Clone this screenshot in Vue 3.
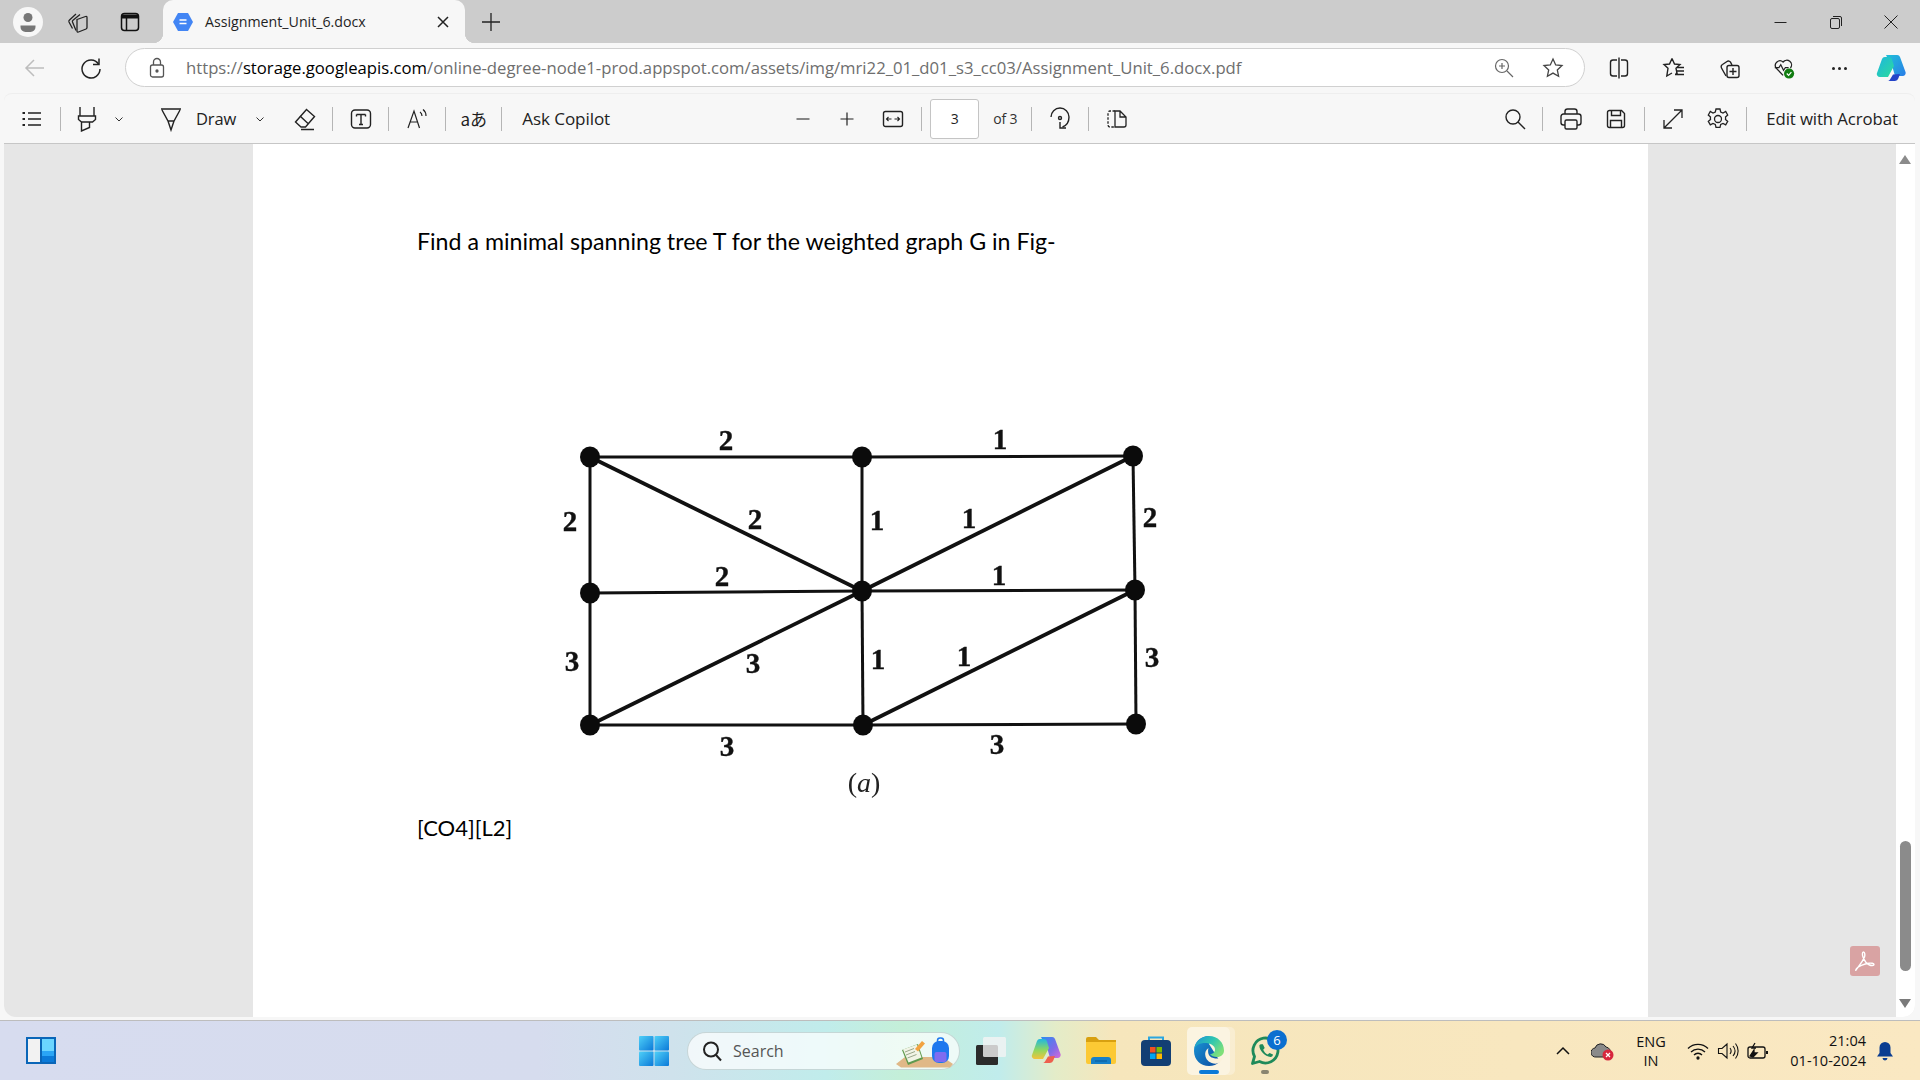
<script setup>
const nodes = [
  [590, 457], [862, 457], [1133, 456],
  [590, 593], [862, 591], [1135, 590],
  [590, 725], [863, 725], [1136, 724]
]

const edges = [
  [0, 1], [1, 2], [3, 4], [4, 5], [6, 7], [7, 8],
  [0, 3], [3, 6], [1, 4], [4, 7], [2, 5], [5, 8]
]

const diagonals = [[0, 4], [4, 2], [4, 6], [7, 5]]

const labels = [
  ['2', 726, 441], ['1', 1000, 440], ['2', 570, 522], ['2', 755, 520],
  ['1', 877, 521], ['1', 969, 519], ['2', 1150, 518], ['2', 722, 577],
  ['1', 999, 576], ['3', 572, 662], ['3', 753, 664], ['1', 878, 660],
  ['1', 964, 657], ['3', 1152, 658], ['3', 727, 747], ['3', 997, 745]
]
</script>

<template>
  <div class="screen">
    <div class="browser">
      <div class="tabstrip">
        <div class="profile">
          <svg width="22" height="22" viewBox="0 0 22 22"><circle cx="11" cy="6.500" r="4.500" fill="#777" /><path d="M3.500 14.500h15v1.500a5 5 0 0 1-5 5h-5a5 5 0 0 1-5-5z" fill="#777" /></svg>
        </div>
        <div class="strip-btn first">
          <svg width="24" height="24" viewBox="0 0 24 24" fill="none" stroke="#222" stroke-width="1.300"><path d="M6.500 18.500 3 12q-.5-1 .5-2L10 4" /><path d="M10 20.500 6.500 12q-.5-1 .5-1.800L14 4.500" /><path d="M11 9.500 19.500 6.500Q21 6 21 7.500V17.500Q21 18.500 20 19L12.500 22Q11 22.500 11 21Z" /></svg>
        </div>
        <div class="strip-btn second">
          <svg width="22" height="22" viewBox="0 0 22 22" fill="none" stroke="#111" stroke-width="1.500"><rect x="2.500" y="2.500" width="17" height="17" rx="3" /><path d="M3 5.500h16" stroke-width="4" /><path d="M7.500 7v12" /></svg>
        </div>
        <div class="tab">
          <svg class="favicon" width="22" height="22" viewBox="0 0 22 22"><path d="M6 2h10l5 9-5 9H6l-5-9z" fill="#4285f4" /><path d="M7.500 9h7M7.500 12.500h7" stroke="#fff" stroke-width="1.400" /></svg>
          <span class="tab-title">Assignment_Unit_6.docx</span>
          <svg class="tab-close" width="14" height="14" viewBox="0 0 14 14" stroke="#222" stroke-width="1.500"><path d="M2 2l10 10M12 2 2 12" /></svg>
        </div>
        <svg class="new-tab" width="20" height="20" viewBox="0 0 20 20" stroke="#222" stroke-width="1.300"><path d="M10 1v18M1 10h18" /></svg>
        <div class="win-controls">
          <svg width="16" height="16" viewBox="0 0 16 16" stroke="#222"><path d="M1.500 8.500h12" /></svg>
          <svg width="16" height="16" viewBox="0 0 16 16" fill="none" stroke="#222"><rect x="2.500" y="4.500" width="9" height="10" rx="1.500" /><path d="M5 2.500h7a1.500 1.500 0 0 1 1.500 1.500v8" /></svg>
          <svg width="16" height="16" viewBox="0 0 16 16" stroke="#222"><path d="M1.500 1.500l13 13M14.500 1.500l-13 13" /></svg>
        </div>
      </div>

      <div class="addressrow">
        <svg class="back" width="22" height="22" viewBox="0 0 22 22" fill="none" stroke="#bdbdbd" stroke-width="1.500"><path d="M20 11H2M10 3l-8 8 8 8" /></svg>
        <svg class="reload" width="24" height="24" viewBox="0 0 24 24" fill="none" stroke="#222" stroke-width="1.500"><path d="M19.500 8A9 9 0 1 0 21 13" /><path d="M20 2.500V8.500H14" /></svg>
        <div class="urlbox">
          <svg class="lock" width="18" height="22" viewBox="0 0 18 22" fill="none" stroke="#555" stroke-width="1.300"><rect x="2.500" y="8" width="13" height="12" rx="2" /><path d="M5.500 8V5a3.500 3.500 0 0 1 7 0v3" /><circle cx="9" cy="14" r="1" fill="#555" /></svg>
          <span class="url"><span class="dim">https://</span>storage.googleapis.com<span class="dim">/online-degree-node1-prod.appspot.com/assets/img/mri22_01_d01_s3_cc03/Assignment_Unit_6.docx.pdf</span></span>
          <svg class="url-zoom" width="20" height="20" viewBox="0 0 20 20" fill="none" stroke="#666" stroke-width="1.200"><circle cx="8" cy="8" r="6.500" /><path d="M8 5v6M5 8h6M13 13l6 6" /></svg>
          <svg class="url-star" width="22" height="22" viewBox="0 0 22 22" fill="none" stroke="#444" stroke-width="1.300"><path d="M11 2l2.700 5.900 6.300.7-4.700 4.300 1.300 6.300L11 16.100l-5.600 3.100 1.300-6.300L2 8.600l6.300-.7z" /></svg>
        </div>
        <div class="addr-icons">
          <svg width="24" height="24" viewBox="0 0 24 24" fill="none" stroke="#222" stroke-width="1.400"><path d="M10 4H6a2.500 2.500 0 0 0-2.500 2.500v11A2.500 2.500 0 0 0 6 20h4M14 4h4a2.500 2.500 0 0 1 2.500 2.500v11A2.500 2.500 0 0 1 18 20h-4M12 1.500v21" /></svg>
          <svg width="24" height="24" viewBox="0 0 24 24" fill="none" stroke="#222" stroke-width="1.400"><path d="M10 2.500l2.500 5.500 5.500.5-4 3.800 1.200 5.700-1.500-.8M10 2.500 7.500 8 2 8.500l4 3.800L4.800 20 10 17" /><path d="M15 11.500h7M15 15h7M13 18.500h9" /></svg>
          <svg width="24" height="24" viewBox="0 0 24 24" fill="none" stroke="#222" stroke-width="1.400"><path d="M9 20 4.500 12A2.500 2.500 0 0 1 5.500 8.500L10 5.500a2.500 2.500 0 0 1 3.500.7L15 9" /><rect x="10" y="9.500" width="12" height="12" rx="2" /><path d="M16 12v7M12.500 15.500h7" /></svg>
          <svg width="24" height="24" viewBox="0 0 26 26" fill="none"><path d="M12 21 4.500 13A5 5 0 0 1 12 6.500 5 5 0 0 1 20 13" stroke="#222" stroke-width="1.400" /><path d="M3 12.500h4.500l2-3 3 6 2-3H18" stroke="#222" stroke-width="1.300" /><circle cx="18.500" cy="19" r="5.500" fill="#107c10" /><path d="M16 19l2 2 3-3.500" stroke="#fff" stroke-width="1.300" /></svg>
          <span class="dots"><i></i><i></i><i></i></span>
          <svg class="copilot-sm" width="30" height="28" viewBox="0 0 30 28">
            <defs>
              <linearGradient id="copa" x1="0" y1="0" x2="1" y2="1"><stop offset="0" stop-color="#1fc0d8" /><stop offset="1" stop-color="#2a7de8" /></linearGradient>
              <linearGradient id="copb" x1="0" y1="0" x2="1" y2="1"><stop offset="0" stop-color="#1db6e0" /><stop offset="1" stop-color="#2ddc9a" /></linearGradient>
            </defs>
            <path d="M10 1h11a3 3 0 0 1 3 2l5.500 15a3 3 0 0 1-2.800 4H19L14.500 6A3 3 0 0 0 11.500 4z" fill="url(#copa)" />
            <path d="M6 5a3 3 0 0 1 2.800-2H13a3 3 0 0 1 2.800 2L18 12l-6 11H4a3 3 0 0 1-3-4z" fill="url(#copb)" />
            <path d="M11 27h8a3.500 3.500 0 0 0 3.300-2.500L24 20l-7 .5-3 5a3 3 0 0 1-3 1.500z" fill="#2343c8" />
          </svg>
        </div>
      </div>

      <div class="toolbar">
        <div class="ti w56">
          <svg width="22" height="22" viewBox="0 0 22 22" stroke="#222" stroke-width="1.400"><path d="M7 5h13M7 11h13M7 17h13" /><path d="M1.500 5h2.500M1.500 11h2.500M1.500 17h2.500" stroke-width="2" /></svg>
        </div>
        <span class="sep"></span>
        <div class="ti w51">
          <svg width="22" height="26" viewBox="0 0 22 26" fill="none" stroke="#222" stroke-width="1.400"><path d="M4 1v9M18 1v9M2.500 10h17v3.500l-3 2.500h-11l-3-2.500zM5.500 16v9l8-3.500V16" /></svg>
        </div>
        <svg class="chev" width="12" height="12" viewBox="0 0 12 12" fill="none" stroke="#333"><path d="M2.500 4.500 6 8l3.500-3.500" /></svg>
        <div class="ti draw-ico">
          <svg width="24" height="26" viewBox="0 0 24 26" fill="none" stroke="#222" stroke-width="1.400"><path d="M2 3h20M3 4l6 11h6l6-11M9 15l3 9 3-9" /></svg>
        </div>
        <span class="tb-text draw">Draw</span>
        <svg class="chev draw-chev" width="12" height="12" viewBox="0 0 12 12" fill="none" stroke="#333"><path d="M2.500 4.500 6 8l3.500-3.500" /></svg>
        <div class="ti eraser">
          <svg width="24" height="24" viewBox="0 0 24 24" fill="none" stroke="#222" stroke-width="1.400"><path d="m13.500 2.500 8 7-9 10.500H8l-5.500-5z" /><path d="m7 9 8 7.500M8 22.500h13" /></svg>
        </div>
        <span class="sep"></span>
        <div class="ti w55">
          <svg width="22" height="22" viewBox="0 0 22 22" fill="none" stroke="#222" stroke-width="1.400"><rect x="1.500" y="2" width="19" height="18" rx="3.500" /><path d="M6.500 6.500h9M11 6.500v10M6.500 8.500v-2M15.500 8.500v-2M9 16.500h4" /></svg>
        </div>
        <span class="sep"></span>
        <div class="ti w56">
          <svg width="24" height="24" viewBox="0 0 24 24" fill="none" stroke="#222" stroke-width="1.200"><path d="M3 21 9 4l5.500 17M5 15h8" /><path d="M15 5c1.500 1 2 2 2 4M18 2.500c2 1.500 3 3.500 3 6.500" /></svg>
        </div>
        <span class="sep"></span>
        <span class="ti w55 translate">aあ</span>
        <span class="sep"></span>
        <span class="tb-text ask">Ask Copilot</span>

        <div class="ti zoom-out">
          <svg width="16" height="16" viewBox="0 0 16 16" stroke="#555" stroke-width="1.400"><path d="M1.500 8h13" /></svg>
        </div>
        <div class="ti zoom-in">
          <svg width="16" height="16" viewBox="0 0 16 16" stroke="#222" stroke-width="1.200"><path d="M1.500 8h13M8 1.500v13" /></svg>
        </div>
        <div class="ti fit">
          <svg width="22" height="20" viewBox="0 0 22 20" fill="none" stroke="#222" stroke-width="1.400"><rect x="1.500" y="2.500" width="19" height="15" rx="2" /><path d="M4.500 10h5M6.500 8l-2 2 2 2M12.500 10h5M15.500 8l2 2-2 2" stroke-width="1.100" /></svg>
        </div>
        <span class="sep"></span>
        <span class="pageinput">3</span>
        <span class="of">of 3</span>
        <span class="sep of-sep"></span>
        <div class="ti w56">
          <svg width="24" height="24" viewBox="0 0 24 24" fill="none" stroke="#222" stroke-width="1.400"><path d="M3 10a9 9 0 0 1 18 0c0 5-2.500 8.500-6.500 10" /><path d="M12 15v6h6" /><circle cx="12" cy="11" r="1.500" /></svg>
        </div>
        <span class="sep"></span>
        <div class="ti w56">
          <svg width="22" height="22" viewBox="0 0 22 22" fill="none" stroke="#222" stroke-width="1.300"><path d="M9 3H4a2 2 0 0 0-2 2v12a2 2 0 0 0 2 2h5" stroke-dasharray="2.500 1.500" /><path d="M9 3v16h9a2 2 0 0 0 2-2V9l-6-6zM14 3v6h6" /></svg>
        </div>

        <div class="ti find">
          <svg width="22" height="22" viewBox="0 0 22 22" fill="none" stroke="#222" stroke-width="1.400"><circle cx="9" cy="9" r="7" /><path d="m14 14 7 7" /></svg>
        </div>
        <span class="sep"></span>
        <div class="ti w56">
          <svg width="24" height="24" viewBox="0 0 24 24" fill="none" stroke="#222" stroke-width="1.400"><path d="M6 7V4.500A2.500 2.500 0 0 1 8.500 2h7A2.500 2.500 0 0 1 18 4.500V7" /><path d="M6 18H4.500A2.500 2.500 0 0 1 2 15.500v-6A2.500 2.500 0 0 1 4.500 7h15A2.500 2.500 0 0 1 22 9.500v6a2.500 2.500 0 0 1-2.500 2.500H18" /><rect x="6" y="13" width="12" height="9" rx="1.500" /></svg>
        </div>
        <div class="ti save">
          <svg width="22" height="22" viewBox="0 0 22 22" fill="none" stroke="#222" stroke-width="1.400"><path d="M2.500 4.500a2 2 0 0 1 2-2h12l3 3v12a2 2 0 0 1-2 2h-13a2 2 0 0 1-2-2z" /><path d="M6.500 2.500v5h9v-5M5.500 19.500v-7h11v7" /></svg>
        </div>
        <span class="sep"></span>
        <div class="ti w56">
          <svg width="24" height="24" viewBox="0 0 24 24" fill="none" stroke="#222" stroke-width="1.300"><path d="M3 21 21 3M13 3h8v8M3 13v8h8" /></svg>
        </div>
        <div class="ti gear">
          <svg width="24" height="24" viewBox="0 0 24 24" fill="none" stroke="#222" stroke-width="1.300"><circle cx="12" cy="12" r="3.500" /><path d="m10 2h4l.7 3 2.300 1 2.700-1.500 2 3.500-2.200 2a7 7 0 0 1 0 2.400l2.200 2-2 3.500-2.700-1.500-2.300 1-.7 3h-4l-.7-3-2.300-1-2.700 1.500-2-3.500 2.200-2a7 7 0 0 1 0-2.400l-2.200-2 2-3.500L7 6l2.300-1z" /></svg>
        </div>
        <span class="sep"></span>
        <span class="tb-text edit">Edit with Acrobat</span>
      </div>

      <div class="content">
        <div class="viewer">
          <div class="page">
            <p class="question">Find a minimal spanning tree T for the weighted graph G in Fig-</p>
            <svg class="graph" width="660" height="395" viewBox="540 415 660 395">
              <line
                v-for="(e, i) in edges"
                :key="i"
                :x1="nodes[e[0]][0]"
                :y1="nodes[e[0]][1]"
                :x2="nodes[e[1]][0]"
                :y2="nodes[e[1]][1]"
                stroke="#111"
                stroke-width="3"
              />
              <line
                v-for="(e, i) in diagonals"
                :key="'d' + i"
                :x1="nodes[e[0]][0]"
                :y1="nodes[e[0]][1]"
                :x2="nodes[e[1]][0]"
                :y2="nodes[e[1]][1]"
                stroke="#111"
                stroke-width="3.800"
              />
              <ellipse v-for="(n, i) in nodes" :key="i" :cx="n[0]" :cy="n[1]" rx="10" ry="10.500" fill="#0b0b0b" />
              <text v-for="(l, i) in labels" :key="i" :x="l[1]" :y="l[2] + 9" class="weight" text-anchor="middle">{{ l[0] }}</text>
              <text x="864" y="792" class="caption" text-anchor="middle">(<tspan class="caption-a">a</tspan>)</text>
            </svg>
            <p class="codes">[CO4][L2]</p>
          </div>
          <div class="acrobat">
            <svg width="24" height="24" viewBox="0 0 24 24" fill="none" stroke="#fff" stroke-width="1.400"><path d="M3 21c2-3 6-7 8.500-13 .6-1.500.5-5-1-5s-1.200 3.300-.5 5c1.500 4 4 7 6.500 8 1.500.6 4.500.8 4.500-.5s-3-1.500-5-1.300c-5 .5-11 3.300-12.500 5.500-.8 1.200-1 2.300-.5 1.300z" /></svg>
          </div>
        </div>
        <div class="scrollbar">
          <span class="arrow up"></span>
          <span class="thumb"></span>
          <span class="arrow down"></span>
        </div>
      </div>
    </div>

    <div class="taskbar">
      <div class="widgets"><span class="w-left"></span><span class="w-right"><i></i><i></i><i></i></span></div>

      <svg class="start" width="30" height="30" viewBox="0 0 30 30">
        <defs><linearGradient id="win" x1="0" y1="0" x2="1" y2="1"><stop offset="0" stop-color="#4fd0f8" /><stop offset="1" stop-color="#0b79d8" /></linearGradient></defs>
        <rect x="0" y="0" width="14.500" height="14.500" rx="1" fill="url(#win)" />
        <rect x="15.500" y="0" width="14.500" height="14.500" rx="1" fill="url(#win)" />
        <rect x="0" y="15.500" width="14.500" height="14.500" rx="1" fill="url(#win)" />
        <rect x="15.500" y="15.500" width="14.500" height="14.500" rx="1" fill="url(#win)" />
      </svg>

      <div class="search">
        <svg width="22" height="22" viewBox="0 0 22 22" fill="none" stroke="#222" stroke-width="2"><circle cx="10" cy="9.500" r="7" /><path d="m15 15 5 5.500" /></svg>
        <span class="search-text">Search</span>
        <svg class="search-art" width="58" height="32" viewBox="0 0 58 32">
          <path d="M0 27 9 20h38l10 7-3 3.500H5z" fill="#e0b887" />
          <path d="M6 13 22 7l5 15-15 6z" fill="#5f9a4e" />
          <path d="M7 12.500 21 7.500l4.500 13-13 5z" fill="#f1f4e6" />
          <path d="M9 15l9-3.500M10 18l9-3.500M11.500 21l9-3.500" stroke="#9aa68a" stroke-width="1" />
          <path d="M19 12 26 4l3 2.500-7 8z" fill="#f2a341" />
          <rect x="36" y="4" width="17" height="22" rx="7" fill="#1e78ee" />
          <rect x="38.500" y="15" width="12" height="10" rx="2" fill="#7f6cf0" />
          <rect x="41.500" y="1" width="6" height="5" rx="2.500" fill="none" stroke="#1e78ee" stroke-width="1.500" />
        </svg>
      </div>

      <div class="app taskview">
        <svg width="30" height="28" viewBox="0 0 30 28"><rect x="0" y="8" width="22" height="20" rx="1.500" fill="#2b2b2b" /><rect x="7" y="0" width="23" height="20" rx="1.500" fill="#f4f4f4" fill-opacity=".8" /></svg>
      </div>
      <div class="app copilot">
        <svg width="30" height="28" viewBox="0 0 30 28">
          <defs>
            <linearGradient id="cpa" x1="0" y1="0" x2="1" y2="1"><stop offset="0" stop-color="#2a8df0" /><stop offset=".6" stop-color="#7f6be8" /><stop offset="1" stop-color="#d86ad8" /></linearGradient>
            <linearGradient id="cpb" x1="0" y1="0" x2="0" y2="1"><stop offset="0" stop-color="#20b8e0" /><stop offset=".55" stop-color="#8ed860" /><stop offset="1" stop-color="#f4c33c" /></linearGradient>
          </defs>
          <path d="M10 1h11a3 3 0 0 1 3 2l5.500 15a3 3 0 0 1-2.800 4H19L14.500 6A3 3 0 0 0 11.500 4z" fill="url(#cpa)" />
          <path d="M6 5a3 3 0 0 1 2.800-2H13a3 3 0 0 1 2.800 2L18 12l-6 11H4a3 3 0 0 1-3-4z" fill="url(#cpb)" />
          <path d="M11 27h8a3.500 3.500 0 0 0 3.300-2.500L24 20l-7 .5-3 5a3 3 0 0 1-3 1.500z" fill="#ee5f4e" />
        </svg>
      </div>
      <div class="app explorer">
        <svg width="30" height="27" viewBox="0 0 30 27"><path d="M0 2a2 2 0 0 1 2-2h8l3 3h17v6H0z" fill="#d8a010" /><path d="M0 5h30v20a2 2 0 0 1-2 2H2a2 2 0 0 1-2-2z" fill="#fcc934" /><path d="M5 27v-4a3 3 0 0 1 3-3h14a3 3 0 0 1 3 3v4z" fill="#1780c8" /><path d="M9 24h12" stroke="#0b5fa0" stroke-width="1.200" /></svg>
      </div>
      <div class="app store">
        <svg width="30" height="30" viewBox="0 0 30 30"><path d="M8 6V1.500h14V6" fill="none" stroke="#2ba6e0" stroke-width="2" /><rect x="0" y="4" width="30" height="26" rx="4" fill="#123f74" /><rect x="9" y="11" width="5.500" height="5.500" fill="#f25022" /><rect x="15.500" y="11" width="5.500" height="5.500" fill="#7fba00" /><rect x="9" y="17.500" width="5.500" height="5.500" fill="#00a4ef" /><rect x="15.500" y="17.500" width="5.500" height="5.500" fill="#ffb900" /></svg>
      </div>
      <div class="app edge">
        <svg width="30" height="30" viewBox="0 0 30 30">
          <defs>
            <linearGradient id="edg" x1="0" y1="0" x2="1" y2="0.600"><stop offset="0" stop-color="#1b8fd8" /><stop offset=".55" stop-color="#2ec6b0" /><stop offset="1" stop-color="#7fe07a" /></linearGradient>
            <linearGradient id="edb" x1="0" y1="0" x2="1" y2="1"><stop offset="0" stop-color="#1b9ad8" /><stop offset="1" stop-color="#0b4aa0" /></linearGradient>
          </defs>
          <path d="M15 0C6 0 0 6.500 0 15c0 9 7 15 15 15 4 0 8-1.500 11-4.500L15 8z" fill="url(#edb)" />
          <path d="M0 13C2 5 8 0 15 0c9 0 15 7 15 14.500 0 4-3 6.500-7 6.500-3 0-6-1-7-3 3 0 5-2 5-4.500C21 9.500 16 7 11 7 6 7 2 9 0 13z" fill="url(#edg)" />
          <path d="M14.500 12c-3 2-4 5-3 8.500 1 4 5.500 8 12 7 3-1 5-3.500 5.500-7-1 1.500-3.500 2-6 2-4 0-7.500-1.500-8.500-4.500-.6-2-.5-4.500 0-6z" fill="#fbf2dc" />
        </svg>
        <span class="active-bar"></span>
      </div>
      <div class="app whatsapp">
        <svg width="30" height="30" viewBox="0 0 30 30" fill="none"><path d="M2.500 27.500 4.500 20.500A12.500 12.500 0 1 1 9.500 25.500z" stroke="#1f8a5a" stroke-width="2.800" stroke-linejoin="round" /><path d="M9.500 9c-1 4.500 5 11.500 11 12 1.500 0 2.500-1.500 2.500-2.500L19.500 17l-1.800 1.500c-2-1-3.500-2.500-4.500-4.800l1.500-1.700-1.800-3.800c-1.500 0-2.500 0-3.400.8z" fill="#1f8a5a" /></svg>
        <span class="badge">6</span>
        <span class="run-dot"></span>
      </div>

      <div class="tray">
        <svg class="t-chev" width="16" height="10" viewBox="0 0 16 10" fill="none" stroke="#111" stroke-width="1.500"><path d="M2 8l6-6 6 6" /></svg>
        <svg class="t-cloud" width="24" height="20" viewBox="0 0 24 20"><path d="M5 16a4.500 4.500 0 0 1-1-9 6 6 0 0 1 11-1 5 5 0 0 1 4 7v3z" fill="#8a8a8a" stroke="#222" stroke-width="1" /><circle cx="17" cy="14" r="5.500" fill="#d7263d" /><path d="m15 12 4 4m0-4-4 4" stroke="#fff" stroke-width="1.200" /></svg>
        <div class="lang"><span>ENG</span><span>IN</span></div>
        <svg class="t-wifi" width="22" height="18" viewBox="0 0 22 18" fill="none" stroke="#111" stroke-width="1.300"><path d="M1 6.500a14 14 0 0 1 20 0M4 10a10 10 0 0 1 14 0M7 13a5.500 5.500 0 0 1 8 0" /><circle cx="11" cy="16" r="1" fill="#111" /></svg>
        <svg class="t-vol" width="22" height="18" viewBox="0 0 22 18" fill="none" stroke="#111" stroke-width="1.100"><path d="M1.500 6.500v5H5l5 4.500V2L5 6.500zM13 6c1.500 2 1.500 4 0 6M16 4c2.500 3 2.500 7 0 10M18.500 1.500c3.500 4.500 3.500 10.500 0 15" /></svg>
        <svg class="t-batt" width="22" height="18" viewBox="0 0 22 18" fill="none" stroke="#111" stroke-width="1.300"><rect x="1" y="5" width="17" height="11" rx="2" /><path d="M20 9v3" stroke-width="2" /><path d="M3 14l4-6v3h3l-4 4z" fill="#111" /><path d="M8 1 5 6h4" /></svg>
        <div class="clock"><span>21:04</span><span>01-10-2024</span></div>
        <div class="t-bell">
          <svg width="18" height="20" viewBox="0 0 18 20"><path d="M9 1a5.500 5.500 0 0 1 5.500 5.500V12l2.500 3.500H1L3.500 12V6.500A5.500 5.500 0 0 1 9 1z" fill="#0b3d91" /><path d="M6.500 17h5a2.500 2.500 0 0 1-5 0z" fill="#0b3d91" /></svg>
        </div>
      </div>
    </div>
  </div>
</template>

<style scoped>
.screen {
  width: 1920px;
  height: 1080px;
  overflow: hidden;
  display: flex;
  flex-direction: column;
  font-family: "Open Sans", "Noto Sans", sans-serif;
  color: #1f1f1f;
}
.browser {
  height: 1020px;
  background: #f7f7f7;
  display: flex;
  flex-direction: column;
}

/* tab strip */
.tabstrip {
  height: 43px;
  flex: none;
  background: #ccc;
  display: flex;
  align-items: center;
}
.profile {
  width: 30px;
  height: 30px;
  margin-left: 13px;
  border-radius: 50%;
  background: #f7f7f7;
  display: flex;
  align-items: center;
  justify-content: center;
}
.strip-btn { display: flex; }
.strip-btn.first { margin-left: 23px; }
.strip-btn.second { margin-left: 29px; }
.tab {
  position: relative;
  width: 302px;
  height: 43px;
  margin-left: 22px;
  background: #f7f7f7;
  border-radius: 10px 10px 0 0;
  display: flex;
  align-items: center;
}
.tab::before,
.tab::after {
  content: "";
  position: absolute;
  bottom: 0;
  width: 10px;
  height: 10px;
}
.tab::before {
  left: -10px;
  background: radial-gradient(circle at 0 0, #ccc 10px, #f7f7f7 10.5px);
}
.tab::after {
  right: -10px;
  background: radial-gradient(circle at 100% 0, #ccc 10px, #f7f7f7 10.5px);
}
.favicon { margin-left: 9px; flex: none; }
.tab-title {
  margin-left: 11px;
  font-size: 14.200px;
  white-space: nowrap;
  width: 232px;
}
.tab-close { flex: none; margin-left: -1px; }
.new-tab { margin-left: 16px; }
.win-controls {
  margin-left: auto;
  width: 147px;
  padding-right: 21px;
  display: flex;
  justify-content: space-between;
  box-sizing: border-box;
}

/* address row */
.addressrow {
  height: 50px;
  flex: none;
  display: flex;
  align-items: center;
}
.back { margin-left: 24px; }
.reload { margin-left: 33px; }
.urlbox {
  width: 1460px;
  height: 39px;
  margin-left: 22px;
  margin-top: -1px;
  box-sizing: border-box;
  background: #fff;
  border: 1px solid #d0d0d0;
  border-radius: 20px;
  display: flex;
  align-items: center;
}
.lock { margin-left: 22px; flex: none; }
.url {
  margin-left: 20px;
  font-size: 16.700px;
  white-space: nowrap;
  color: #000;
  width: 1308px;
  flex: none;
}
.dim { color: #6e6e6e; }
.url-zoom { flex: none; }
.url-star { flex: none; margin-left: 28px; }
.addr-icons {
  margin-left: 22px;
  display: flex;
  align-items: center;
  gap: 31px;
}
.dots { display: flex; gap: 3px; width: 24px; justify-content: center; }
.dots i { width: 3px; height: 3px; border-radius: 50%; background: #222; }
.copilot-sm { margin-left: -6px; }

/* pdf toolbar */
.toolbar {
  height: 51px;
  flex: none;
  box-sizing: border-box;
  margin: 0 5px 0 4px;
  background: #f7f7f7;
  border-top: 1px solid #eee;
  border-bottom: 1px solid #c6c6c6;
  border-radius: 8px 8px 0 0;
  display: flex;
  align-items: center;
}
.ti {
  flex: none;
  height: 36px;
  display: flex;
  align-items: center;
  justify-content: center;
}
.w51 { width: 51px; }
.w55 { width: 55px; }
.w56 { width: 56px; }
.sep { width: 1px; height: 24px; background: #b5b5b5; flex: none; }
.chev { flex: none; margin-left: 1px; }
.draw-ico { margin-left: 33px; width: 26px; }
.draw { margin-left: 12px; }
.draw-chev { margin-left: 18px; }
.eraser { width: 24px; margin-left: 27px; margin-right: 15px; }
.translate { font-size: 17px; font-family: "Noto Sans CJK JP", "Noto Sans", sans-serif; }
.tb-text { font-size: 16.500px; white-space: nowrap; color: #222; flex: none; letter-spacing: -0.1px; }
.ask { margin-left: 20px; width: 88px; font-size: 17.100px; }
.zoom-out { width: 24px; margin-left: 181px; }
.zoom-in { width: 24px; margin-left: 20px; }
.fit { width: 24px; margin-left: 22px; margin-right: 16px; }
.pageinput {
  flex: none;
  width: 49px;
  height: 40px;
  margin-left: 8px;
  box-sizing: border-box;
  background: #fff;
  border: 1px solid #c4c4c4;
  border-radius: 3px;
  font-size: 14px;
  text-align: center;
  line-height: 38px;
}
.of { flex: none; margin-left: 14px; font-size: 14px; color: #333; white-space: nowrap; letter-spacing: -0.2px; }
.of-sep { margin-left: 14px; }
.find { width: 24px; margin-left: 358px; margin-right: 15px; }
.save { width: 24px; margin-left: 5px; margin-right: 16px; }
.gear { width: 24px; margin-left: 5px; margin-right: 16px; }
.edit { margin-left: 19px; font-size: 16.800px; }

/* pdf content */
.content {
  height: 873px;
  flex: none;
  margin: 0 5px 0 4px;
  background: #e6e6e6;
  display: flex;
  border-radius: 0 0 12px 12px;
  overflow: hidden;
}
.viewer {
  position: relative;
  flex: 1;
}
.page {
  width: 1395px;
  height: 873px;
  margin-left: 249px;
  background: #fff;
  padding-left: 164px;
  box-sizing: border-box;
  font-family: Lato, "Open Sans", sans-serif;
  font-size: 23.180px;
  line-height: 28px;
  color: #000;
}
.question {
  margin: 0;
  padding-top: 83px;
}
.graph {
  display: block;
  margin: 160px 0 0 123px;
  filter: blur(0.4px);
}
.weight {
  font-family: "Liberation Serif", serif;
  font-weight: 700;
  font-size: 29px;
  fill: #111;
  stroke: #111;
  stroke-width: 0.4px;
}
.caption {
  font-family: "Liberation Serif", serif;
  font-size: 28px;
  fill: #222;
}
.caption-a { font-style: italic; }
.codes {
  margin: 4px 0 0;
  font-size: 22px;
}
.acrobat {
  position: absolute;
  left: 1846px;
  top: 802px;
  width: 30px;
  height: 30px;
  background: #d9a3a3;
  border-radius: 3px;
  display: flex;
  align-items: center;
  justify-content: center;
}
.scrollbar {
  width: 19px;
  flex: none;
  background: #fff;
  position: relative;
}
.thumb {
  position: absolute;
  left: 4px;
  top: 697px;
  width: 11px;
  height: 130px;
  border-radius: 6px;
  background: #8b8b8b;
}
.arrow {
  position: absolute;
  left: 3px;
  width: 0;
  height: 0;
  border-left: 6.500px solid transparent;
  border-right: 6.500px solid transparent;
}
.arrow.up { top: 11px; border-bottom: 9px solid #8b8b8b; }
.arrow.down { top: 855px; border-top: 9px solid #7a7a7a; }

/* taskbar */
.taskbar {
  height: 60px;
  flex: none;
  box-sizing: border-box;
  border-top: 1px solid #bdbdbd;
  background: linear-gradient(90deg, #d7dcef 0%, #d6dcee 28%, #cfe2ec 35%, #c0eceb 43%, #c4efd8 47%, #c0ecec 52%, #e4ecc8 55%, #f6e6bc 58%, #fae8c2 100%);
  display: flex;
  align-items: center;
}
.widgets {
  margin-left: 26px;
  width: 30px;
  height: 27px;
  box-sizing: border-box;
  padding: 2px;
  background: #0a66b8;
  display: flex;
  gap: 2px;
  flex: none;
}
.w-left { width: 12px; background: #f2f2f2; }
.w-right { flex: 1; display: flex; flex-direction: column; }
.w-right i { flex: 1; }
.w-right i:nth-child(1) { flex: 2; background: #6bd5ff; }
.w-right i:nth-child(2) { background: #2aa5f5; }
.w-right i:nth-child(3) { background: #0b7ad8; }
.start { margin-left: 583px; flex: none; }
.search {
  margin-left: 18px;
  width: 273px;
  height: 38px;
  flex: none;
  box-sizing: border-box;
  padding-left: 13px;
  position: relative;
  border-radius: 19px;
  background: rgba(255, 255, 255, 0.72);
  border: 1px solid rgba(120, 150, 150, 0.35);
  display: flex;
  align-items: center;
}
.search-text { margin-left: 10px; font-size: 16px; color: #555; }
.search-art { position: absolute; right: 5px; top: 4px; }
.app {
  position: relative;
  width: 48px;
  height: 48px;
  flex: none;
  display: flex;
  align-items: center;
  justify-content: center;
}
.taskview { margin-left: 7px; }
.copilot { margin-left: 7px; margin-top: -2px; }
.explorer { margin-left: 7px; }
.store { margin-left: 7px; }
.edge {
  width: 43px;
  margin-left: 7px;
  background: rgba(255, 255, 255, 0.55);
  border-radius: 5px;
  box-shadow: 5px 0 0 rgba(255, 255, 255, 0.3);
}
.whatsapp { margin-left: 11px; }
.active-bar {
  position: absolute;
  bottom: 1px;
  left: 12px;
  width: 20px;
  height: 4px;
  border-radius: 2px;
  background: #0b7ad8;
}
.run-dot {
  position: absolute;
  bottom: 1px;
  left: 20px;
  width: 8px;
  height: 4px;
  border-radius: 2px;
  background: #8a8570;
}
.badge {
  position: absolute;
  left: 26px;
  top: 3px;
  width: 20px;
  height: 20px;
  border-radius: 50%;
  background: #0b6fd0;
  color: #fff;
  font-size: 13px;
  line-height: 20px;
  text-align: center;
}
.tray {
  margin-left: 256px;
  display: flex;
  align-items: center;
  flex: none;
  font-size: 14.500px;
  color: #111;
}
.t-chev { margin: 0 10px; }
.t-cloud { margin: 0 10px; }
.lang {
  width: 52px;
  margin-right: 3px;
  display: flex;
  flex-direction: column;
  align-items: center;
  line-height: 19px;
}
.t-wifi { margin: 0 7px; }
.t-vol { margin: 0 1px; }
.t-batt { margin: 0 7px; }
.clock {
  width: 90px;
  display: flex;
  flex-direction: column;
  align-items: flex-end;
  line-height: 20px;
  white-space: nowrap;
}
.t-bell {
  width: 38px;
  display: flex;
  justify-content: center;
}
</style>

<style>
html, body { background: #fff; overflow: hidden; }
</style>
